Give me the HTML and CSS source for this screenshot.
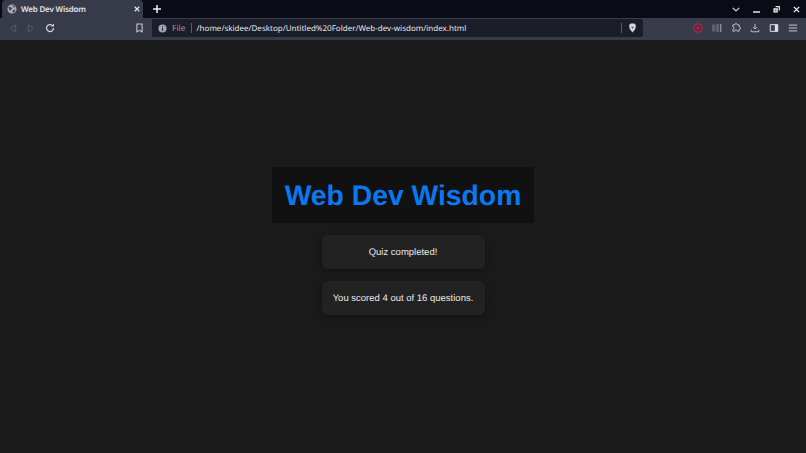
FILE: index.html
```html
<!DOCTYPE html>
<html lang="en">
<head>
<meta charset="utf-8">
<title>Web Dev Wisdom</title>
<link rel="stylesheet" href="styles.css">
</head>
<body>
<div class="browser">
  <div class="tabstrip">
    <div class="tab">
      <svg class="ico globe" viewBox="0 0 12 12"><circle cx="6" cy="6" r="5.500" fill="#a4a7b0"/><path d="M1.500 3.500l3 .3 1.500 2-2 2-1.300-1.300zM7 1.200l3 1.800-2 1.500zM7 7.500l3-.7-1.200 3-1.800.7z" fill="#3f424f"/></svg>
      <span class="tabtitle">Web Dev Wisdom</span>
      <svg class="ico close" viewBox="0 0 8 8"><path d="M1 1l6 6M7 1l-6 6" stroke="#e6e7ea" stroke-width="1.500"/></svg>
    </div>
    <svg class="ico plus" viewBox="0 0 9 9"><path d="M4.500 0v9M0 4.500h9" stroke="#f1f2f4" stroke-width="1.700"/></svg>
    <div class="winctl">
      <svg class="ico chev" viewBox="0 0 8 5"><path d="M.8.8L4 4l3.200-3.200" fill="none" stroke="#d8d9de" stroke-width="1.200"/></svg>
      <svg class="ico min" viewBox="0 0 7 7"><path d="M0 6h7" stroke="#e6e7ea" stroke-width="1.500"/></svg>
      <svg class="ico rest" viewBox="0 0 8 8"><path d="M3 .8h4.200V5" fill="none" stroke="#e6e7ea" stroke-width="1.400"/><path d="M.5 2.500h5v5h-5z" fill="#e6e7ea"/><path d="M2 4h2v2H2z" fill="#6d6f78"/></svg>
      <svg class="ico x" viewBox="0 0 8 8"><path d="M1 1l6 6M7 1l-6 6" stroke="#eceded" stroke-width="1.600"/></svg>
    </div>
  </div>
  <div class="toolbar">
    <div class="navs">
      <svg class="ico nav" viewBox="0 0 8 10"><path d="M7 1L1 5l6 4z" fill="none" stroke="#5d606c" stroke-width="1"/></svg>
      <svg class="ico nav" viewBox="0 0 8 10"><path d="M1 1l6 4-6 4z" fill="none" stroke="#5d606c" stroke-width="1"/></svg>
      <svg class="ico reload" viewBox="0 0 10 10"><path d="M8.500 5A3.500 3.500 0 1 1 7.300 2.400" fill="none" stroke="#d8d9de" stroke-width="1.200"/><path d="M9 .6v3H6z" fill="#d8d9de"/></svg>
    </div>
    <svg class="ico bookmark" viewBox="0 0 8 11"><path d="M1 1h6v9L4 8.200 1 10z" fill="none" stroke="#c6c8ce" stroke-width="1.200"/></svg>
    <div class="urlbar">
      <svg class="ico info" viewBox="0 0 10 10"><circle cx="5" cy="5" r="4.500" fill="#a0a3ad"/><path d="M5 4.300v3M5 2.400v1" stroke="#1b1d28" stroke-width="1.100"/></svg>
      <span class="scheme">File</span>
      <span class="sep"></span>
      <span class="url">/home/skidee/Desktop/Untitled%20Folder/Web-dev-wisdom/index.html</span>
      <span class="sep end"></span>
      <svg class="ico shield" viewBox="0 0 10 11"><path d="M1.200 2.200l1.800-1.700h4l1.800 1.700-.7 4.300L5 10.500 1.900 6.500z" fill="#d5d6da"/><path d="M3.500 4h3L5 6.500z" fill="#55575f"/></svg>
    </div>
    <div class="tools">
      <svg class="ico t-play" viewBox="0 0 10 10"><circle cx="5" cy="5" r="4.200" fill="#5a2740" stroke="#b0244a" stroke-width="1.200"/><path d="M3.800 3v4l3-2z" fill="#c02a55"/></svg>
      <svg class="ico t-bars" viewBox="0 0 10 10"><path d="M0 1.500h3.500v7H0zM4.200 1h3v8h-3z" fill="#5f626d"/><path d="M8 1h1.400v8H8z" fill="#8b8e94"/></svg>
      <svg class="ico t" viewBox="0 0 12 12"><path d="M4.500 2.200a1.500 1.500 0 0 1 3 0h2.300v2.300a1.500 1.500 0 0 1 0 3v2.300H7.500a1.500 1.500 0 0 0-3 0H2.200V7.500a1.500 1.500 0 0 0 0-3V2.200z" fill="none" stroke="#c6c8ce" stroke-width="1.100"/></svg>
      <svg class="ico t" viewBox="0 0 12 12"><path d="M6 1v6M3.500 4.800L6 7.300l2.500-2.500M1.500 8v2.500h9V8" fill="none" stroke="#c6c8ce" stroke-width="1.100"/></svg>
      <svg class="ico t" viewBox="0 0 12 12"><path d="M1.500 2h9v8h-9z" fill="none" stroke="#e0e1e5" stroke-width="1.200"/><path d="M7 2h3.500v8H7z" fill="#e0e1e5"/></svg>
      <svg class="ico t" viewBox="0 0 12 12"><path d="M1 2.500h10M1 6h10M1 9.500h10" stroke="#c6c8ce" stroke-width="1.200"/></svg>
    </div>
  </div>
  <main class="page">
    <h1 class="title">Web Dev Wisdom</h1>
    <div class="card">Quiz completed!</div>
    <div class="card">You scored 4 out of 16 questions.</div>
  </main>
</div>
</body>
</html>
```
FILE: styles.css
```css
* { box-sizing: border-box; }
html, body { margin: 0; height: 100%; overflow: hidden; }
body { background: #1a1a1a; font-family: "Liberation Sans", Arial, sans-serif; text-rendering: geometricPrecision; }
.browser { display: flex; flex-direction: column; height: 453px; }
.ico { display: block; flex: none; }
.tabstrip { display: flex; align-items: center; height: 18px; background: #0a0b14; }
.tab { display: flex; align-items: center; width: 141px; height: 18px; margin-left: 2px; padding: 0 3px 0 5px; background: #383b49; border-radius: 4px 4px 0 0; }
.globe { width: 10px; height: 10px; }
.tabtitle { flex: 1; margin-left: 4px; font: 600 8px "Noto Sans", sans-serif; letter-spacing: -.2px; color: #e3e4e8; white-space: nowrap; }
.close { width: 6px; height: 6px; }
.plus { width: 8px; height: 8px; margin-left: 10px; }
.winctl { display: flex; align-items: center; margin-left: auto; gap: 13px; padding-right: 6px; }
.chev { width: 8px; height: 5px; }
.min, .rest, .x { width: 7px; height: 7px; }
.toolbar { display: flex; align-items: center; height: 22px; padding-bottom: 2px; background: #383b49; }
.navs { display: flex; align-items: center; gap: 10px; margin-left: 9px; }
.nav { width: 8px; height: 9px; }
.reload { width: 10px; height: 10px; }
.bookmark { width: 7px; height: 10px; margin-left: 81px; }
.urlbar { display: flex; align-items: center; width: 491px; height: 18px; margin-left: 9px; padding: 0 6px; background: #1b1d28; border-radius: 2px; }
.info { width: 9px; height: 9px; }
.scheme { margin-left: 5px; font: 8.500px "Noto Sans", sans-serif; color: #93959f; }
.sep { width: 1px; height: 10px; margin: 0 5px 0 5px; background: #5b5d68; }
.url { flex: 1; font: 8.030px "Noto Sans", sans-serif; color: #e6e7ea; white-space: nowrap; }
.sep.end { margin: 0 6px 0 0; }
.shield { width: 9px; height: 10px; }
.tools { display: flex; align-items: center; gap: 9px; margin-left: 50px; }
.tools .ico { width: 10px; height: 10px; }
.page { flex: 1; display: flex; flex-direction: column; align-items: center; padding-top: 127px; background: #1a1a1a; }
.title { margin: 0; padding: 12px 12.500px; background: #111; color: #0a78f0; font-size: 28.300px; font-weight: 700; line-height: 32px; }
.card { width: 163px; margin-top: 12px; padding: 11.500px 5px; background: #222; border-radius: 6px; color: #e8e8e8; font-size: 9.500px; line-height: 11px; text-align: center; box-shadow: 0 2px 6px rgba(0,0,0,.3); }
```
